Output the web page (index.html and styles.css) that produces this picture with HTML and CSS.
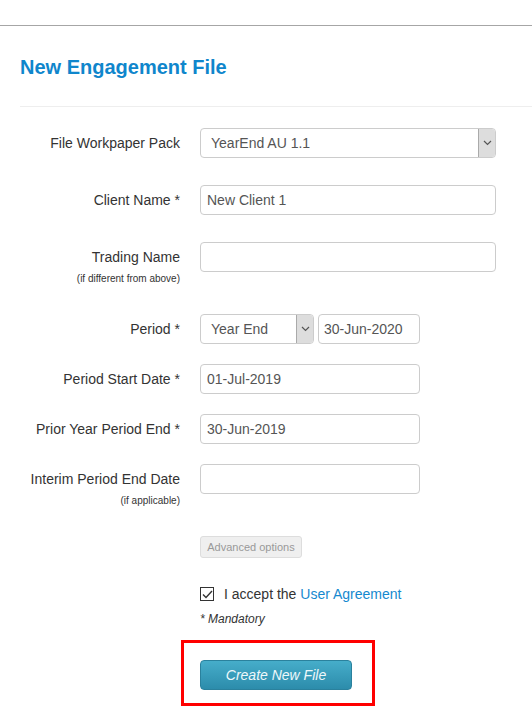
FILE: index.html
```html
<!DOCTYPE html>
<html>
<head>
  <title>New Engagement File</title>
  <link rel="stylesheet" href="styles.css">
</head>
<body>

<div class="topbar"></div>

<div class="page">
  <h1 class="title">New Engagement File</h1>

  <form class="form">
    <div class="row wide">
      <label class="label">File Workpaper Pack</label>
      <div class="select full">
        <span class="select-value pack">YearEnd AU 1.1</span>
        <span class="select-arrow">
          <svg width="9" height="6" viewBox="0 0 9 6"><path d="M1 1l3.5 3.5L8 1" fill="none" stroke="#555" stroke-width="1.2"/></svg>
        </span>
      </div>
    </div>

    <div class="row wide">
      <label class="label">Client Name *</label>
      <input class="input full" type="text" value="New Client 1">
    </div>

    <div class="row tall">
      <label class="label">Trading Name<small>(if different from above)</small></label>
      <input class="input full" type="text">
    </div>

    <div class="row">
      <label class="label">Period *</label>
      <div class="pair">
        <div class="select period">
          <span class="select-value pack">Year End</span>
          <span class="select-arrow">
            <svg width="9" height="6" viewBox="0 0 9 6"><path d="M1 1l3.5 3.5L8 1" fill="none" stroke="#555" stroke-width="1.2"/></svg>
          </span>
        </div>
        <input class="input end" type="text" value="30-Jun-2020">
      </div>
    </div>

    <div class="row">
      <label class="label">Period Start Date *</label>
      <input class="input date" type="text" value="01-Jul-2019">
    </div>

    <div class="row">
      <label class="label">Prior Year Period End *</label>
      <input class="input date" type="text" value="30-Jun-2019">
    </div>

    <div class="row tall">
      <label class="label">Interim Period End Date<small>(if applicable)</small></label>
      <input class="input date" type="text">
    </div>

    <div class="extras">
      <button type="button" class="btn-advanced">Advanced options</button>

      <div class="accept">
        <span class="checkbox">
          <svg width="11" height="9" viewBox="0 0 11 9"><path d="M1 4.5l3 3L10 1" fill="none" stroke="#333" stroke-width="1.4"/></svg>
        </span>
        <span>I accept the <a href="#" class="link">User Agreement</a></span>
      </div>

      <p class="mandatory">* Mandatory</p>
    </div>

    <div class="highlight">
      <button type="button" class="btn-create">Create New File</button>
    </div>
  </form>
</div>

</body>
</html>
```

FILE: styles.css
```css
body {
  margin: 0;
  font-family: "Liberation Sans", Arial, sans-serif;
  font-size: 14px;
  color: #333;
  background: #fff;
}
.topbar {
  height: 25px;
  border-bottom: 1px solid #a6a6a6;
}
.page {
  padding-left: 20px;
}
.title {
  margin: 0;
  padding: 29px 0 27px;
  font-size: 20px;
  line-height: 24px;
  font-weight: bold;
  color: #0f86cc;
  border-bottom: 1px solid #eee;
}
.form {
  padding-top: 21px;
}
.row {
  display: grid;
  grid-template-columns: 160px 1fr;
  column-gap: 20px;
  margin-bottom: 20px;
}
.row.wide {
  margin-bottom: 27px;
}
.row.tall {
  margin-bottom: 29px;
}
.label {
  text-align: right;
  line-height: 30px;
}
.label small {
  display: block;
  font-size: 10px;
  line-height: 13px;
  color: #333;
}
.input, .select {
  box-sizing: border-box;
  height: 30px;
  border: 1px solid #ccc;
  border-radius: 4px;
  background: #fff;
  font-family: inherit;
  font-size: 14px;
  color: #555;
}
.input {
  padding: 0 6px;
}
.full {
  width: 296px;
}
.date {
  width: 220px;
}
.pair {
  display: flex;
  gap: 4px;
}
.period {
  width: 114px;
}
.end {
  width: 102px;
  padding: 0 5px;
}
.select {
  position: relative;
  display: flex;
  align-items: center;
}
.select-value {
  padding-left: 10px;
}
.select-arrow {
  position: absolute;
  top: 0;
  right: 0;
  bottom: 0;
  width: 16px;
  display: flex;
  align-items: center;
  justify-content: center;
  background: #ddd;
  border-left: 1px solid #aaa;
  border-radius: 0 3px 3px 0;
}
.extras {
  padding-left: 180px;
}
.btn-advanced {
  height: 22px;
  width: 102px;
  padding: 0;
  border: 1px solid #ddd;
  border-radius: 3px;
  background: #efefef;
  font-family: inherit;
  font-size: 11px;
  color: #999;
}
.accept {
  display: flex;
  align-items: center;
  gap: 10px;
  margin-top: 26px;
  line-height: 20px;
}
.checkbox {
  box-sizing: border-box;
  width: 14px;
  height: 14px;
  border: 1px solid #333;
  display: flex;
  align-items: center;
  justify-content: center;
}
.link {
  color: #1589cf;
  text-decoration: none;
}
.mandatory {
  margin: 8px 0 0;
  font-size: 12px;
  line-height: 14px;
  font-style: italic;
}
.highlight {
  width: 172px;
  margin: 14px 0 0 161px;
  padding: 17px 0 13px 16px;
  border: 3px solid #f00;
}
.btn-create {
  width: 152px;
  height: 30px;
  border: 1px solid #2a819d;
  border-radius: 4px;
  background: linear-gradient(#46adca, #2c8cab);
  font-family: inherit;
  font-size: 14px;
  font-style: italic;
  color: #eef8fb;
}
```
